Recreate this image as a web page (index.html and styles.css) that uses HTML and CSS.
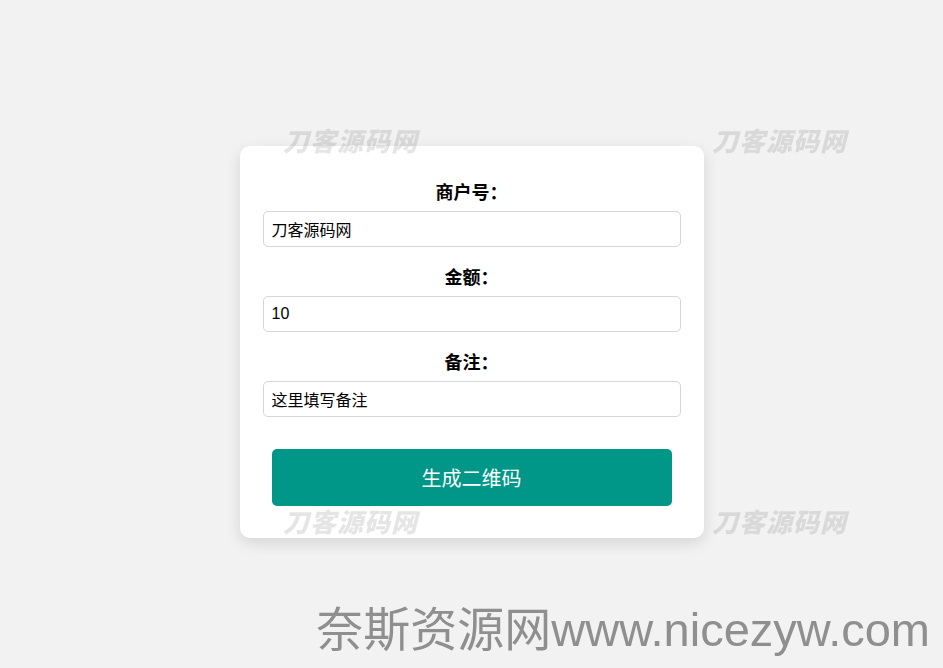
FILE: index.html
```html
<!DOCTYPE html>
<html lang="zh-CN">
<head>
    <meta charset="UTF-8">
    <meta name="viewport" content="width=device-width, initial-scale=1.0">
    <title>生成二维码</title>
    <link rel="stylesheet" href="styles.css">
</head>
<body>
    <div class="container">
        <form id="qr-form">
            <label for="merchant">商户号：</label>
            <input type="text" id="merchant" value="刀客源码网">
            <label for="amount">金额：</label>
            <input type="text" id="amount" value="10">
            <label for="remark">备注：</label>
            <input type="text" id="remark" value="这里填写备注">
            <button type="submit">生成二维码</button>
        </form>
    </div>

    <!-- Watermarks -->
    <div class="watermarks">
        <span class="mark mark-tl">刀客源码网</span>
        <span class="mark mark-tr">刀客源码网</span>
        <span class="mark mark-bl">刀客源码网</span>
        <span class="mark mark-br">刀客源码网</span>
    </div>
    <div class="site-mark">奈斯资源网www.nicezyw.com</div>
</body>
</html>
```

FILE: styles.css
```css
body {
    font-family: Arial, "Liberation Sans", "Noto Sans CJK SC", sans-serif;
    background-color: #f2f2f2;
    margin: 8px;
    height: 100vh;
    display: flex;
    justify-content: center;
    align-items: center;
}

.container {
    width: 464px;
    box-sizing: border-box;
    padding: 33px 23px 32px;
    background-color: #fff;
    border-radius: 10px;
    box-shadow: 0 5px 15px rgba(0, 0, 0, 0.12);
}

form {
    display: flex;
    flex-direction: column;
}

label {
    display: block;
    text-align: center;
    font-family: "Noto Sans CJK SC", sans-serif;
    font-size: 18px;
    font-weight: bold;
    line-height: 24px;
    margin-bottom: 8px;
    color: #000;
}

input {
    height: 36px;
    box-sizing: border-box;
    margin-bottom: 17px;
    padding: 0 8px;
    font-family: inherit;
    font-size: 16px;
    color: #000;
    border: 1px solid #d6d6d6;
    border-radius: 5px;
}

button {
    width: 400px;
    height: 57px;
    margin: 15px auto 0;
    background-color: #009688;
    color: #fff;
    border: none;
    border-radius: 5px;
    font-family: inherit;
    font-size: 20px;
    cursor: pointer;
}

.watermarks {
    position: fixed;
    top: 0;
    left: 0;
    right: 0;
    bottom: 0;
    pointer-events: none;
}

.mark {
    position: absolute;
    font-family: "Noto Sans CJK SC", sans-serif;
    font-size: 26px;
    font-weight: 900;
    font-style: italic;
    line-height: 26px;
    letter-spacing: 1px;
    color: rgba(0, 0, 0, 0.1);
}

.mark-tl { left: 283px; top: 127px; }
.mark-tr { left: 712px; top: 127px; }
.mark-bl { left: 283px; top: 508px; }
.mark-br { left: 712px; top: 508px; }

.site-mark {
    position: fixed;
    right: 13px;
    bottom: 14px;
    font-family: "Liberation Sans", "Noto Sans CJK SC", sans-serif;
    font-size: 47px;
    line-height: 48px;
    color: #8f8f8f;
    pointer-events: none;
}
```
